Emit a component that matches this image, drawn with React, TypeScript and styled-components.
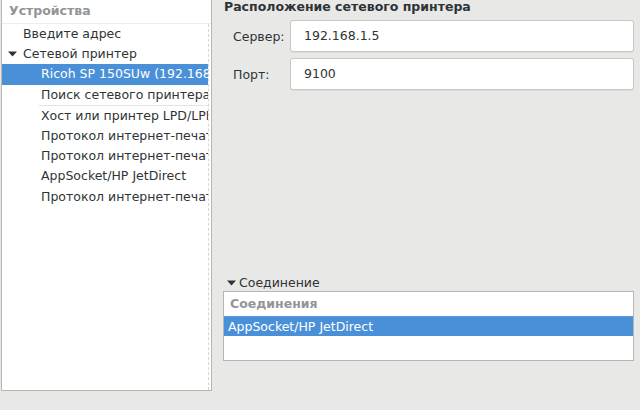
import React from 'react';
import styled, { createGlobalStyle } from 'styled-components';

const colors = {
  bg: '#e8e8e7',
  text: '#2e3436',
  dim: '#929595',
  border: '#b6b6b3',
  entryBorder: '#cdc7c2',
  select: '#4a90d9',
  grid: '#d6d6d4',
};

const GlobalStyle = createGlobalStyle`
  * {
    margin: 0;
    padding: 0;
    box-sizing: border-box;
  }
  html, body, #root {
    height: 100%;
  }
  body {
    font-family: "DejaVu Sans", "Noto Sans", sans-serif;
    font-size: 12.5px;
    background: ${colors.bg};
    color: ${colors.text};
    overflow: hidden;
  }
`;

const Window = styled.div`
  display: flex;
  height: 410px;
  width: 640px;
  padding-left: 1px;
`;

const Sidebar = styled.div`
  width: 211px;
  height: 391px;
  background: #fff;
  border-left: 1px solid ${colors.border};
  border-right: 1px solid ${colors.border};
  border-bottom: 1px solid ${colors.border};
  display: flex;
  flex-direction: column;
  overflow: hidden;
`;

const ColumnHeader = styled.div`
  height: 24px;
  line-height: 22px;
  padding-left: 7px;
  font-weight: bold;
  color: ${colors.dim};
  border-bottom: 1px solid #ececec;
  white-space: nowrap;
`;

const TreeBody = styled.div`
  flex: 1;
  display: flex;
`;

const TreeRows = styled.div`
  width: 207px;
  border-right: 1px dashed ${colors.grid};
  display: flex;
  flex-direction: column;
`;

const Row = styled.div<{ $level: number; $selected?: boolean }>`
  height: 20.2px;
  line-height: 20px;
  padding-left: ${({ $level }) => 21 + $level * 18}px;
  white-space: nowrap;
  overflow: hidden;
  position: relative;
  flex-shrink: 0;
  background: ${({ $selected }) => ($selected ? colors.select : 'transparent')};
  color: ${({ $selected }) => ($selected ? '#fff' : colors.text)};
`;

const Expander = styled.svg`
  position: absolute;
  left: 6px;
  top: 7px;
`;

const RowSeparator = styled.div`
  height: 1px;
  flex-shrink: 0;
  margin-left: 37px;
  background: #e4e4e4;
`;

const Content = styled.div`
  flex: 1;
  display: flex;
  flex-direction: column;
  padding: 0 6px 49px 11px;
`;

const Title = styled.div`
  font-weight: bold;
  line-height: 13px;
  padding-left: 1px;
  white-space: nowrap;
`;

const Form = styled.div`
  display: grid;
  grid-template-columns: 57px 1fr;
  row-gap: 6px;
  align-items: center;
  margin-top: 7px;
  padding-left: 10px;
`;

const Label = styled.label`
  white-space: nowrap;
`;

const Entry = styled.div`
  height: 32px;
  line-height: 30px;
  background: #fff;
  border: 1px solid ${colors.entryBorder};
  border-radius: 3px;
  box-shadow: 0 1px rgba(0, 0, 0, 0.05);
  padding-left: 13px;
`;

const Spacer = styled.div`
  flex: 1;
`;

const SectionToggle = styled.div`
  display: flex;
  align-items: center;
  gap: 3px;
  height: 15px;
  padding-left: 4px;
  margin-bottom: 1px;
`;

const ListBox = styled.div`
  height: 70px;
  background: #fff;
  border: 1px solid ${colors.border};
  display: flex;
  flex-direction: column;
`;

const ListHeader = styled.div`
  height: 24px;
  line-height: 23px;
  padding-left: 6px;
  font-weight: bold;
  color: ${colors.dim};
`;

const ListItem = styled.div<{ $selected?: boolean }>`
  height: 20px;
  line-height: 19px;
  padding-left: 4px;
  background: ${({ $selected }) => ($selected ? colors.select : 'transparent')};
  color: ${({ $selected }) => ($selected ? '#fff' : colors.text)};
  border-top: 1px solid ${({ $selected }) => ($selected ? '#5d9be0' : 'transparent')};
`;

const Arrow: React.FC = () => (
  <svg width="9" height="6" viewBox="0 0 9 6">
    <polygon points="0,0.5 9,0.5 4.5,5.5" fill={colors.text} />
  </svg>
);

const devices = [
  { label: 'Введите адрес', level: 0 },
  { label: 'Сетевой принтер', level: 0, open: true },
  { label: 'Ricoh SP 150SUw (192.168.1.5)', level: 1, selected: true },
  { label: 'Поиск сетевого принтера', level: 1, sep: true },
  { label: 'Хост или принтер LPD/LPR', level: 1 },
  { label: 'Протокол интернет-печати (ipp)', level: 1 },
  { label: 'Протокол интернет-печати (https)', level: 1 },
  { label: 'AppSocket/HP JetDirect', level: 1 },
  { label: 'Протокол интернет-печати (ipps)', level: 1 },
];

const App: React.FC = () => {
  return (
    <>
      <GlobalStyle />
      <Window>
        <Sidebar>
          <ColumnHeader>Устройства</ColumnHeader>
          <TreeBody>
            <TreeRows>
              {devices.map((d) => (
                <React.Fragment key={d.label}>
                  <Row $level={d.level} $selected={d.selected}>
                    {d.open && (
                      <Expander width="9" height="6" viewBox="0 0 9 6">
                        <polygon points="0,0.5 9,0.5 4.5,5.5" fill={colors.text} />
                      </Expander>
                    )}
                    {d.label}
                  </Row>
                  {d.sep && <RowSeparator />}
                </React.Fragment>
              ))}
            </TreeRows>
          </TreeBody>
        </Sidebar>
        <Content>
          <Title>Расположение сетевого принтера</Title>
          <Form>
            <Label>Сервер:</Label>
            <Entry>192.168.1.5</Entry>
            <Label>Порт:</Label>
            <Entry>9100</Entry>
          </Form>
          <Spacer />
          <SectionToggle>
            <Arrow />
            Соединение
          </SectionToggle>
          <ListBox>
            <ListHeader>Соединения</ListHeader>
            <ListItem $selected>AppSocket/HP JetDirect</ListItem>
          </ListBox>
        </Content>
      </Window>
    </>
  );
};

export default App;
